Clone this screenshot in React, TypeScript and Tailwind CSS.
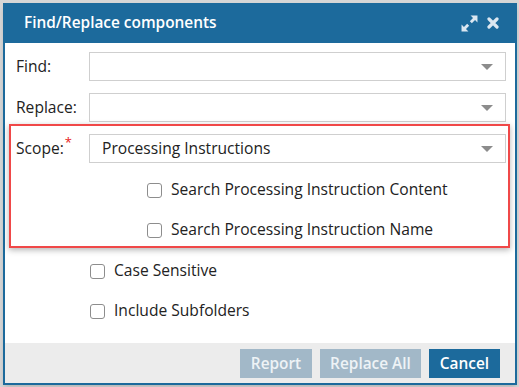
import React from 'react';

const font = { fontFamily: '"Open Sans", "Noto Sans", Arial, sans-serif' };

function Caret() {
  return (
    <svg width="12" height="6" viewBox="0 0 12 6" className="shrink-0">
      <path d="M0 0 L12 0 L6 6 Z" fill="#8c8c8c" />
    </svg>
  );
}

function Select({ value }: { value?: string }) {
  return (
    <div className="flex-1 h-[29px] border border-[#cfcfcf] bg-white flex items-center pl-[12px] pr-[12px]">
      <span className="flex-1 text-[15.6px] text-[#222]">{value}</span>
      <Caret />
    </div>
  );
}

function Check({ label }: { label: string }) {
  return (
    <div className="flex items-center h-[24px]">
      <span className="w-[15px] h-[15px] rounded-[3px] border-[1.5px] border-[#8d8d8d] bg-white shrink-0" />
      <span className="ml-[9px] text-[15.6px] text-[#222]">{label}</span>
    </div>
  );
}

export default function App() {
  return (
    <div className="w-[519px] h-[387px] bg-[#d6d6d6] pt-[3px] pl-[3px] overflow-hidden" style={font}>
      <div className="w-[514px] h-[382px] bg-white border-x-2 border-b-2 border-[#1c6a9c] flex flex-col shadow-md">
        {/* header */}
        <div className="h-[40px] -mx-[2px] bg-[#1c6a9c] flex items-center pl-[21px] pr-[18px]">
          <span className="flex-1 text-white text-[15.4px] font-semibold">Find/Replace components</span>
          <svg width="17" height="17" viewBox="0 0 16 16" className="mr-[9px]">
            <g fill="#dbe7f1">
              <path d="M9 0.5 L15.5 0.5 L15.5 7 L13.2 4.7 L10.2 7.7 L8.3 5.8 L11.3 2.8 Z" />
              <path d="M7 15.5 L0.5 15.5 L0.5 9 L2.8 11.3 L5.8 8.3 L7.7 10.2 L4.7 13.2 Z" />
            </g>
          </svg>
          <svg width="12" height="12" viewBox="0 0 12 12">
            <path d="M2 2 L10 10 M10 2 L2 10" stroke="#dbe7f1" strokeWidth="3.2" strokeLinecap="round" />
          </svg>
        </div>

        {/* body */}
        <div className="flex-1 flex flex-col pt-[9px]">
          <div className="flex items-center ml-[11px] mr-[9px]">
            <span className="w-[73px] text-[15.6px] text-[#222]">Find:</span>
            <Select />
          </div>
          <div className="flex items-center ml-[11px] mr-[9px] mt-[12px]">
            <span className="w-[73px] text-[15.6px] text-[#222]">Replace:</span>
            <Select />
          </div>

          <div className="ml-[4px] mr-[5px] mt-[2px] border-2 border-[#f04848] pl-[5px] pr-[2px] pt-[8px] pb-[4px] shadow-[0_2px_6px_rgba(0,0,0,0.3)]">
            <div className="flex items-center">
              <span className="w-[73px] text-[15.6px] text-[#222]">
                Scope:<sup className="text-[#e82020] text-[13px] ml-[1px]">*</sup>
              </span>
              <Select value="Processing Instructions" />
            </div>
            <div className="flex flex-col gap-[16px] mt-[15px] pl-[131px]">
              <Check label="Search Processing Instruction Content" />
              <Check label="Search Processing Instruction Name" />
            </div>
          </div>

          <div className="flex flex-col gap-[16px] mt-[11px] pl-[85px]">
            <Check label="Case Sensitive" />
            <Check label="Include Subfolders" />
          </div>
        </div>

        {/* footer */}
        <div className="h-[40px] bg-[#ececec] flex items-start justify-end pt-[6px] pr-[15px] gap-[8px]">
          <button className="w-[72px] h-[29px] bg-[#a2b8c8] text-[#eef3f6] text-[15.4px] font-semibold">Report</button>
          <button className="w-[101px] h-[29px] bg-[#a2b8c8] text-[#eef3f6] text-[15.4px] font-semibold">Replace All</button>
          <button className="w-[71px] h-[29px] bg-[#1c6a9c] text-white text-[15.4px] font-semibold">Cancel</button>
        </div>
      </div>
    </div>
  );
}
